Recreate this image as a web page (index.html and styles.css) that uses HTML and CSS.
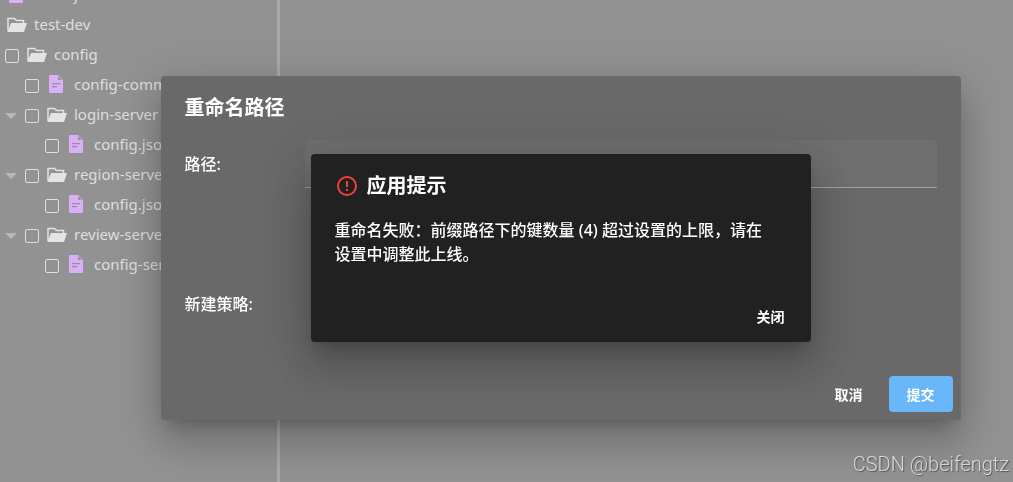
FILE: index.html
```
<!DOCTYPE html>
<html lang="zh-CN">
<head>
    <meta charset="UTF-8">
    <meta name="viewport" content="width=device-width, initial-scale=1.0">
    <title>重命名路径</title>
    <link rel="stylesheet" href="styles.css">
</head>
<body>
    <svg class="sprite" aria-hidden="true">
        <symbol id="folder" viewBox="0 0 20 16">
            <path d="M1 14V1.500H7.500L9.500 3.500H16.500V6" fill="none" stroke="currentColor" stroke-width="1.500"/>
            <path d="M4 6H20L17 15H0.500Z" fill="currentColor"/>
        </symbol>
        <symbol id="file" viewBox="0 0 14 18">
            <path fill-rule="evenodd" d="M1 0H9L14 5V17Q14 18 13 18H1Q0 18 0 17V1Q0 0 1 0ZM9 1V5H13ZM3 8V9.300H11V8ZM3 11V12.300H8V11Z" fill="currentColor"/>
        </symbol>
    </svg>

    <div class="app">
        <nav class="tree">
            <div class="row">
                <svg class="file"><use href="#file"/></svg>
                <span>node.json</span>
            </div>
            <div class="row">
                <svg class="folder"><use href="#folder"/></svg>
                <span>test-dev</span>
            </div>
            <div class="row">
                <input type="checkbox" id="n1">
                <svg class="folder"><use href="#folder"/></svg>
                <label for="n1">config</label>
            </div>
            <div class="row level-1">
                <span class="toggle"></span>
                <input type="checkbox" id="n2">
                <svg class="file"><use href="#file"/></svg>
                <label for="n2">config-common.json</label>
            </div>
            <div class="row level-1">
                <span class="toggle open"></span>
                <input type="checkbox" id="n3">
                <svg class="folder"><use href="#folder"/></svg>
                <label for="n3">login-server</label>
            </div>
            <div class="row level-2">
                <input type="checkbox" id="n4">
                <svg class="file"><use href="#file"/></svg>
                <label for="n4">config.json</label>
            </div>
            <div class="row level-1">
                <span class="toggle open"></span>
                <input type="checkbox" id="n5">
                <svg class="folder"><use href="#folder"/></svg>
                <label for="n5">region-server</label>
            </div>
            <div class="row level-2">
                <input type="checkbox" id="n6">
                <svg class="file"><use href="#file"/></svg>
                <label for="n6">config.json</label>
            </div>
            <div class="row level-1">
                <span class="toggle open"></span>
                <input type="checkbox" id="n7">
                <svg class="folder"><use href="#folder"/></svg>
                <label for="n7">review-server</label>
            </div>
            <div class="row level-2">
                <input type="checkbox" id="n8">
                <svg class="file"><use href="#file"/></svg>
                <label for="n8">config-server.json</label>
            </div>
        </nav>
        <main class="content"></main>
    </div>

    <div class="overlay">
        <section class="dialog" role="dialog" aria-labelledby="renameTitle">
            <h2 id="renameTitle">重命名路径</h2>
            <div class="field">
                <label for="path">路径:</label>
                <input type="text" id="path">
            </div>
            <div class="field strategy">
                <span>新建策略:</span>
            </div>
            <div class="actions">
                <button class="btn" type="button">取消</button>
                <button class="btn primary" type="button">提交</button>
            </div>
        </section>
    </div>

    <div class="overlay">
        <section class="dialog alert" role="alertdialog" aria-labelledby="alertTitle">
            <h2 id="alertTitle">
                <svg class="warn" viewBox="0 0 24 24">
                    <circle cx="12" cy="12" r="9" fill="none" stroke="currentColor" stroke-width="2"/>
                    <path d="M11 7H13V13H11ZM11 15H13V17H11Z" fill="currentColor"/>
                </svg>
                应用提示
            </h2>
            <p>重命名失败：前缀路径下的键数量 (4) 超过设置的上限，请在设置中调整此上线。</p>
            <div class="actions">
                <button class="btn" type="button">关闭</button>
            </div>
        </section>
    </div>

    <div class="watermark">CSDN @beifengtz</div>
</body>
</html>
```
FILE: styles.css
```
* {
    box-sizing: border-box;
}

body {
    margin: 0;
    background-color: #929292;
    color: #fff;
    font-family: "Noto Sans", "Noto Sans CJK SC", sans-serif;
    overflow: hidden;
}

.sprite {
    display: none;
}

.app {
    display: flex;
    height: 100vh;
}

.tree {
    width: 280px;
    margin-top: -20px;
    border-right: 3px solid #a9a9a9;
    color: #dedede;
    font-family: "Noto Sans", sans-serif;
    font-size: 15px;
    overflow: hidden;
}

.content {
    flex: 1;
}

.row {
    display: flex;
    align-items: center;
    height: 30px;
    padding-left: 5px;
    white-space: nowrap;
}

.row label,
.row span {
    padding-bottom: 2px;
}

.row input {
    appearance: none;
    flex: none;
    width: 14px;
    height: 14px;
    margin: 2px 6px 0 0;
    border: 1px solid #dedede;
    border-radius: 2px;
}

.level-2 {
    padding-left: 45px;
}

.row .toggle {
    flex: none;
    width: 12px;
    margin-right: 8px;
    padding: 0;
}

.toggle.open {
    height: 6px;
    margin-top: 2px;
    background-color: #b8b8b8;
    clip-path: polygon(0 0, 100% 0, 50% 100%);
}

.folder {
    flex: none;
    width: 20px;
    height: 16px;
    margin: 0 7px 0 2px;
    color: #e4e4e4;
}

.file {
    flex: none;
    width: 14px;
    height: 18px;
    margin: 0 11px 2px 4px;
    color: #d9b0f7;
}

/* dialogs */
.overlay {
    position: fixed;
    inset: 0;
    display: flex;
    align-items: center;
    justify-content: center;
    padding: 38px 24px 24px 132px;
}

.dialog {
    width: 100%;
    max-width: 800px;
    background-color: #696969;
    border-radius: 4px;
    box-shadow: 0 11px 15px -7px rgba(0, 0, 0, 0.2),
                0 24px 38px 3px rgba(0, 0, 0, 0.14),
                0 9px 46px 8px rgba(0, 0, 0, 0.12);
}

.dialog h2 {
    display: flex;
    align-items: center;
    margin: 0;
    padding: 16px 24px;
    font-size: 20px;
    font-weight: 700;
    line-height: 32px;
}

.field {
    display: flex;
    padding: 0 24px;
    font-size: 16px;
    font-weight: 500;
    line-height: 48px;
}

.field label {
    width: 120px;
}

.field input {
    flex: 1;
    height: 48px;
    padding: 0 12px;
    border: 0;
    border-bottom: 1px solid #a0a0a0;
    border-radius: 4px 4px 0 0;
    background-color: #6f6f6f;
    color: #fff;
    font: inherit;
    outline: none;
}

.strategy {
    margin-top: 92px;
    margin-bottom: 40px;
}

.actions {
    display: flex;
    justify-content: flex-end;
    gap: 8px;
    padding: 8px;
}

.btn {
    min-width: 64px;
    height: 36px;
    padding: 0 16px;
    border: 0;
    border-radius: 4px;
    background-color: transparent;
    color: #fff;
    font-family: inherit;
    font-size: 14px;
    font-weight: 700;
    cursor: pointer;
}

.btn.primary {
    background-color: #69b7f8;
}

.alert {
    max-width: 500px;
    background-color: #212121;
}

.warn {
    width: 24px;
    height: 24px;
    margin-right: 8px;
    color: #f44336;
}

.alert p {
    margin: 0;
    padding: 0 40px 24px 24px;
    font-size: 16px;
    font-weight: 500;
    line-height: 24px;
}

.watermark {
    position: fixed;
    right: 4px;
    bottom: 6px;
    color: #d8d8d8;
    font-family: Roboto, sans-serif;
    font-size: 20px;
    font-weight: 300;
    text-shadow: 1px 1px 1px #555;
}
```
